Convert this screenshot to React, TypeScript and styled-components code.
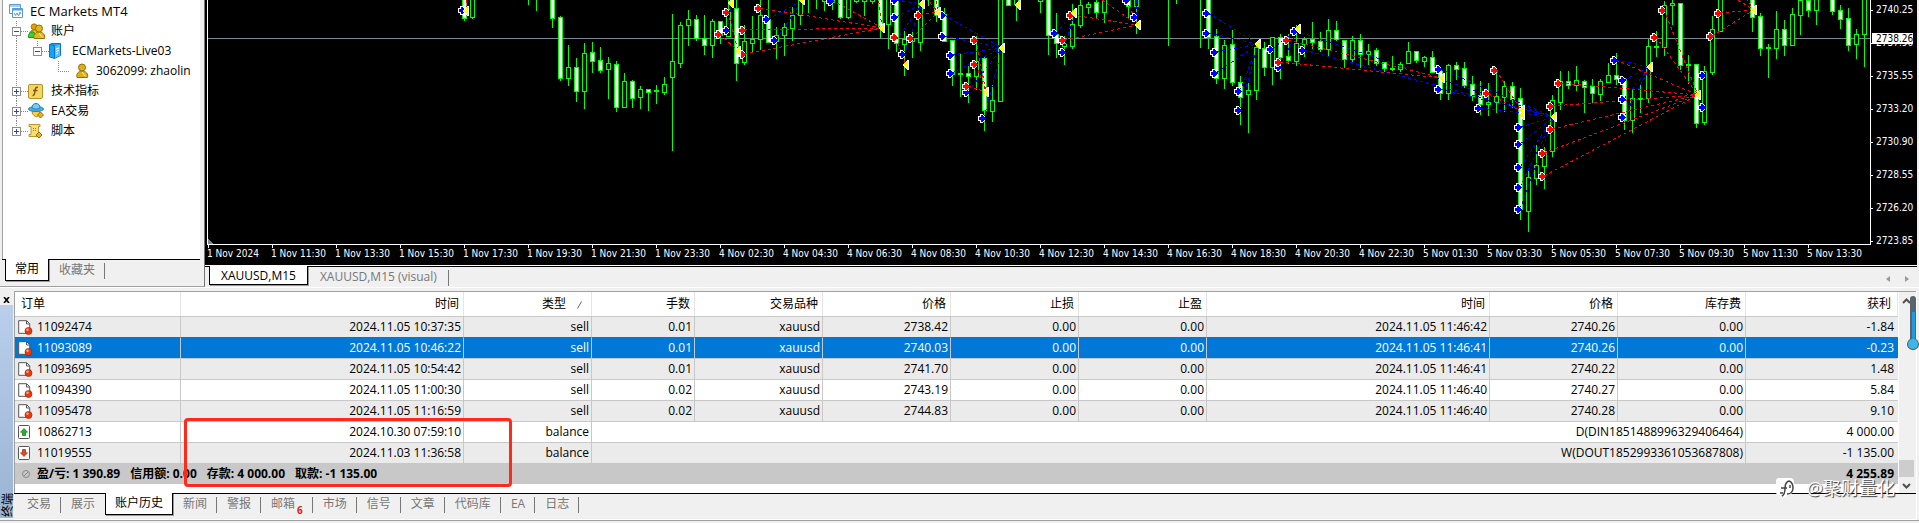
import React, { ReactNode } from "react";
import styled, { createGlobalStyle, css } from "styled-components";

const uiFont = `"Open Sans", "Noto Sans CJK SC", sans-serif`;
const frame = "#f0f0f0";
const line = "#a0a0a0";

const GlobalStyle = createGlobalStyle`
  * { box-sizing: border-box; }
  body {
    margin: 0;
    background: ${frame};
    color: #000;
    font: 12px/20px ${uiFont};
  }
  button { font: inherit; color: inherit; border: 0; padding: 0; background: none; }
  svg { display: block; }
`;

const App = styled.div`
  display: flex;
  flex-direction: column;
  min-height: 100vh;
  overflow: hidden;
`;

/* ---------- upper half: navigator and chart ---------- */

const Upper = styled.div`
  display: flex;
  height: 288px;
  border-bottom: 1px solid #fff;
`;

const Navigator = styled.aside`
  flex: none;
  display: flex;
  flex-direction: column;
  width: 205px;
  padding: 0 4px 2px 2px;
  border-right: 1px solid #777;
  border-bottom: 1px solid ${line};
`;

const NavBody = styled.nav`
  flex: 1;
  background: #fff;
  border-left: 1px solid ${line};
`;

const Tree = styled.ul`
  list-style: none;
  margin: 0;
  padding: 1px 0 0;
`;

const TreeRow = styled.li<{ $depth: number }>`
  display: flex;
  align-items: center;
  height: 20px;
  padding-left: ${(p) => [6, 8, 29, 52][p.$depth]}px;
  font-size: ${(p) => (p.$depth ? 12 : 13)}px;
  white-space: nowrap;
`;

const TreeIcon = styled.span<{ $wide?: boolean }>`
  flex: none;
  width: ${(p) => (p.$wide ? 23 : 21)}px;
`;

const Toggle = styled.button`
  flex: none;
  width: 17px;
  height: 20px;
`;

const TabBar = styled.div<{ $height: number; $start: number }>`
  display: flex;
  flex: none;
  align-items: flex-start;
  height: ${(p) => p.$height}px;
  border-top: 1px solid #000;
  padding-left: ${(p) => p.$start}px;
  background: ${frame};
`;

const activeTab = css<{ $roomy?: boolean }>`
  background: #fff;
  color: #000;
  border: 1px solid #000;
  border-top: 0;
  box-shadow: 1px 1px 0 #999;
  padding: 0 ${(p) => (p.$roomy ? 11 : 9)}px;
  margin-top: -1px;
`;

const Tab = styled.button<{ $active?: boolean; $next?: boolean; $roomy?: boolean; $height: number }>`
  position: relative;
  display: flex;
  flex: none;
  height: ${(p) => p.$height}px;
  line-height: 20px;
  padding: 0 ${(p) => (p.$roomy ? 12 : 10)}px;
  color: #777;
  white-space: nowrap;
  ${(p) =>
    !p.$active &&
    !p.$next &&
    css`
      background: linear-gradient(#777, #777) right 3px / 1px 16px no-repeat;
    `}
  ${(p) => p.$active && activeTab}
`;

const Unread = styled.sub`
  align-self: flex-end;
  margin-left: 2px;
  font-size: 10px;
  font-weight: bold;
  line-height: 12px;
  color: #e02020;
`;

const ChartColumn = styled.main`
  flex: 1;
  min-width: 0;
  display: flex;
  flex-direction: column;
  padding-right: 2px;
`;

const ChartWindow = styled.section`
  display: grid;
  grid-template-columns: 1fr 46px;
  grid-template-rows: 245px 20px;
  padding-left: 2px;
  background: #000;
  color: #fff;
  font: 10px/12px "DejaVu Sans Condensed", "DejaVu Sans", sans-serif;
`;

const Plot = styled.div`
  min-width: 0;
  overflow: hidden;
  border: solid #fff;
  border-width: 0 1px 1px;
`;

const PriceAxis = styled.div`
  position: relative;
`;

const PriceScale = styled.div`
  display: flex;
  flex-direction: column;
  justify-content: space-between;
  height: 247px;
  padding-top: 4px;
`;

const Price = styled.span`
  display: flex;
  align-items: center;
  height: 12px;
  &::before {
    content: "";
    width: 2px;
    height: 1px;
    margin-right: 3px;
    background: #fff;
  }
`;

const CurrentPrice = styled.strong`
  position: absolute;
  top: 33px;
  left: 1px;
  width: 41px;
  padding-left: 4px;
  height: 11px;
  line-height: 11px;
  background: #fff;
  color: #000;
  font-weight: normal;
`;

const TimeAxis = styled.div`
  grid-column: 1 / 3;
  display: flex;
  overflow: hidden;
`;

const Time = styled.span`
  flex: none;
  width: 64px;
  padding-top: 3px;
  white-space: nowrap;
  background: linear-gradient(#fff, #fff) 1px 0 / 1px 3px no-repeat;
`;

const ChartTabs = styled.div`
  display: flex;
  justify-content: space-between;
  border-top: 1px solid #fff;
`;

const Scrollers = styled.div`
  flex: none;
  display: flex;
  gap: 15px;
  padding: 5px 8px 0 0;
  border-top: 1px solid #000;
`;

const Stretch = styled.div`
  flex: 1;
  min-width: 0;
  overflow: hidden;
`;

/* ---------- lower half: terminal ---------- */

const Terminal = styled.section`
  position: relative;
  display: flex;
  height: 233px;
  padding-top: 3px;
  border-bottom: 1px solid ${line};
`;

const Grip = styled.div`
  flex: none;
  width: 14px;
  display: flex;
  flex-direction: column;
  padding-bottom: 2px;
`;

const Close = styled.button`
  height: 14px;
  padding: 3px 0 0 3px;
`;

const GripBar = styled.div`
  flex: 1;
  width: 13px;
  display: flex;
  align-items: flex-end;
  padding-bottom: 1px;
  background: linear-gradient(#b9cfeb, #9ab4d3);
`;

const GripTitle = styled.span`
  width: 13px;
  height: 25px;
  writing-mode: vertical-rl;
  text-orientation: sideways;
  transform: rotate(180deg);
  line-height: 13px;
  font-family: "Noto Sans CJK SC", sans-serif;
  white-space: nowrap;
`;

const TerminalBody = styled.div`
  flex: 1;
  min-width: 0;
  display: flex;
  flex-direction: column;
  margin-right: 2px;
  padding-bottom: 2px;
  border-bottom: 1px solid #fff;
  border-right: 1px solid #fff;
`;

const ListArea = styled.div`
  flex: 1;
  display: flex;
  background: #fff;
  border: solid ${line};
  border-width: 1px 0 0 1px;
`;

const TableWrap = styled.div`
  flex: 1;
  min-width: 0;
  overflow: hidden;
`;

const Table = styled.table`
  width: 100%;
  table-layout: fixed;
  border-collapse: separate;
  border-spacing: 0;
  text-align: right;
`;

const Head = styled.th<{ $left?: boolean; $last?: boolean }>`
  height: 24px;
  padding: 0 4px 0 6px;
  ${(p) => p.$last && "padding-right: 6px;"}
  text-align: ${(p) => (p.$left ? "left" : "right")};
  font-weight: normal;
  line-height: 20px;
  border-right: 1px solid #e5e5e5;
  white-space: nowrap;
`;

const SortMark = styled.svg`
  display: inline-block;
  margin: 0 5px 0 11px;
  vertical-align: middle;
`;

const Row = styled.tr<{ $shade?: boolean; $selected?: boolean }>`
  background: ${(p) => (p.$selected ? "#0078d7" : p.$shade ? "#ebebeb" : "#fff")};
  color: ${(p) => (p.$selected ? "#fff" : "#000")};
  --rule: ${(p) => (p.$selected ? "#0078d7" : "#c8c8c8")};
`;

const Cell = styled.td<{ $left?: boolean; $last?: boolean }>`
  height: 21px;
  padding: 0 2px 0 3px;
  text-align: ${(p) => (p.$left ? "left" : "right")};
  line-height: 20px;
  white-space: nowrap;
  border-top: 1px solid var(--rule);
  border-right: 1px solid #c8c8c8;
  ${(p) => p.$last && "border-right-color: transparent; padding-right: 3px;"}
`;

const OrderCell = styled.span`
  display: flex;
  align-items: center;
  gap: 4px;
  height: 20px;
`;

const Summary = styled.tr`
  background: #c8c8c8;
  font-weight: bold;
  white-space: nowrap;
`;

const SummaryCell = styled.td<{ $left?: boolean }>`
  height: 21px;
  padding: 0 4px 0 6px;
  line-height: 20px;
  text-align: ${(p) => (p.$left ? "left" : "right")};
`;

const SummaryList = styled.div`
  display: flex;
  align-items: center;
  gap: 10px;
`;

const SummaryItem = styled.span`
  display: flex;
  align-items: center;
  gap: 6px;
`;

const ScrollBar = styled.div`
  flex: none;
  width: 17px;
  display: flex;
  flex-direction: column;
  justify-content: space-between;
  align-items: center;
  padding: 6px 2px 4px 0;
  margin-left: 1px;
  background: ${frame};
`;

const ScrollThumb = styled.span`
  width: 15px;
  height: 17px;
  margin: auto 0 6px;
  background: #cdcdcd;
`;

const Highlight = styled.div`
  position: absolute;
  left: 184px;
  top: 130px;
  width: 328px;
  height: 69px;
  border: 3px solid #ff2a1c;
  border-radius: 4px;
`;

const Thermometer = styled.svg`
  position: absolute;
  right: 0;
  top: 7px;
`;

const Watermark = styled.div`
  position: absolute;
  right: 24px;
  top: 188px;
  display: flex;
  align-items: center;
  gap: 12px;
  height: 24px;
  font-size: 18px;
  color: #fff;
  text-shadow: 1px 1px 1px #333;
`;

/* ---------- chart data ---------- */

// x, high, body top, body bottom, low, filled
type Candle = [number, number, number, number, number, 0 | 1];
const candles: Candle[] = [
  [464, -5, -5, 18, 20, 1], [472, -5, -5, 17, 18, 0], [528, -5, -5, -4, 4, 0], [536, -5, -5, -4, 10, 0],
  [552, -5, -5, 18, 27, 1], [560, 16, 17, 78, 80, 1], [568, 45, 67, 78, 85, 0], [576, 58, 67, 91, 101, 1],
  [584, 43, 53, 91, 108, 0], [592, 42, 52, 61, 72, 1], [600, 47, 60, 70, 72, 1], [608, 57, 63, 69, 98, 0],
  [616, 61, 64, 107, 111, 1], [624, 73, 81, 107, 107, 0], [632, 80, 81, 98, 107, 1], [640, 86, 89, 97, 108, 0],
  [648, 89, 89, 92, 110, 1], [656, 85, 90, 91, 103, 0], [664, 77, 84, 92, 94, 0], [672, 14, 61, 77, 150, 0],
  [680, 22, 25, 63, 67, 0], [688, 10, 19, 25, 45, 0], [696, 15, 19, 38, 40, 1], [704, 15, 38, 45, 54, 1],
  [712, 19, 21, 45, 57, 0], [720, 21, 21, 35, 43, 1], [728, 0, 9, 36, 36, 0], [736, -5, 8, 63, 80, 1],
  [744, 25, 41, 62, 64, 0], [752, 16, 39, 43, 52, 0], [760, 0, 15, 39, 49, 0], [768, -5, 19, 42, 42, 1],
  [776, 27, 35, 41, 58, 0], [784, 23, 27, 35, 55, 0], [792, 7, 15, 28, 40, 0], [800, -5, -5, 15, 24, 0],
  [808, -5, -5, -4, 12, 0], [816, -5, -5, -4, 8, 0], [824, -5, -5, 1, 10, 0], [832, -5, 0, 2, 9, 0],
  [840, -5, -5, 17, 18, 1], [848, -5, -5, 17, 18, 0], [856, -5, -5, 1, 2, 0], [864, -5, -5, 1, 15, 0],
  [872, -5, -5, 1, 3, 0], [880, -5, -5, 27, 37, 1], [888, -5, -5, 24, 48, 0], [896, -5, -5, 43, 51, 1],
  [904, 31, 39, 44, 75, 0], [912, 31, 38, 41, 57, 0], [920, -5, -5, 42, 50, 0], [928, -5, -5, -4, 5, 0],
  [936, -5, -5, 15, 21, 1], [944, 8, 14, 41, 41, 1], [952, 40, 40, 74, 85, 1], [960, 54, 73, 74, 96, 0],
  [968, 66, 73, 76, 102, 1], [976, 36, 61, 76, 89, 0], [984, 56, 58, 110, 130, 1], [992, 85, 100, 111, 121, 0],
  [1000, -5, -5, 101, 101, 0], [1008, -5, -5, 5, 5, 1], [1016, -5, -5, 4, 20, 0],
  [1040, -5, -5, 1, 12, 0], [1048, -5, -5, 35, 54, 1], [1056, 13, 34, 43, 57, 1], [1064, 36, 43, 46, 64, 0],
  [1072, 4, 24, 46, 48, 0], [1080, -5, 5, 25, 27, 0], [1088, 2, 4, 7, 13, 0], [1096, -5, 2, 12, 18, 1],
  [1104, -5, -5, 12, 22, 0], [1128, -5, -5, 6, 18, 1], [1136, -5, -5, 6, 33, 0], [1168, -5, -5, -4, 45, 0],
  [1176, -5, -5, -4, 3, 0], [1200, -5, -5, -4, 47, 0], [1208, -5, -5, 37, 48, 1], [1216, 29, 36, 78, 83, 1],
  [1224, 40, 45, 78, 88, 0], [1232, 30, 44, 82, 85, 1], [1240, 76, 82, 97, 124, 1], [1248, 83, 90, 94, 132, 0],
  [1256, 46, 47, 90, 99, 0], [1264, 42, 48, 67, 75, 1], [1272, 37, 37, 67, 84, 0], [1280, 34, 37, 57, 78, 1],
  [1288, 34, 56, 60, 63, 1], [1296, 25, 43, 61, 65, 0], [1304, 37, 39, 44, 56, 0], [1312, 22, 39, 42, 48, 1],
  [1320, 32, 41, 49, 51, 1], [1328, 19, 30, 49, 55, 0], [1336, 21, 30, 39, 40, 1], [1344, 40, 40, 59, 67, 1],
  [1352, 36, 40, 59, 63, 0], [1360, 34, 40, 54, 67, 1], [1368, 44, 51, 54, 64, 0], [1376, 48, 50, 63, 65, 1],
  [1384, 62, 62, 68, 71, 1], [1392, 56, 68, 69, 70, 0], [1400, 62, 64, 69, 71, 0], [1408, 42, 51, 63, 63, 0],
  [1416, 51, 51, 60, 62, 1], [1424, 56, 57, 61, 66, 0], [1432, 51, 57, 72, 72, 1], [1440, 68, 70, 93, 99, 1],
  [1448, 64, 65, 93, 99, 0], [1456, 62, 65, 69, 79, 1], [1464, 62, 68, 85, 87, 1], [1472, 76, 84, 96, 100, 1],
  [1480, 81, 95, 104, 114, 1], [1488, 83, 102, 104, 115, 0], [1496, 71, 96, 102, 112, 0], [1504, 81, 86, 97, 111, 0],
  [1512, 82, 86, 99, 107, 1], [1520, 88, 98, 209, 219, 1], [1528, 170, 177, 211, 231, 0], [1536, 145, 165, 178, 184, 0],
  [1544, 147, 151, 166, 188, 0], [1552, 95, 100, 151, 156, 0], [1560, 71, 81, 102, 109, 0], [1568, 71, 81, 85, 88, 1],
  [1576, 66, 80, 85, 90, 0], [1584, 80, 81, 87, 112, 1], [1592, 79, 86, 93, 102, 1], [1600, 79, 81, 94, 100, 0],
  [1608, 63, 75, 82, 82, 0], [1616, 53, 75, 79, 84, 1], [1624, 78, 78, 120, 129, 1], [1632, 88, 98, 120, 132, 0],
  [1640, 85, 98, 99, 112, 0], [1648, 39, 46, 98, 102, 0], [1656, 31, 46, 47, 56, 0], [1664, 1, 5, 47, 55, 0],
  [1672, -5, 3, 5, 24, 0], [1680, 3, 3, 65, 69, 1], [1688, 55, 64, 65, 83, 0], [1696, 64, 64, 123, 127, 1],
  [1704, 66, 71, 122, 124, 0], [1712, 16, 29, 72, 74, 0], [1720, -5, -5, 31, 31, 0], [1752, -5, -5, 17, 31, 1],
  [1760, 13, 16, 48, 55, 1], [1768, 44, 47, 48, 77, 0], [1776, 11, 29, 48, 58, 0], [1784, 20, 29, 45, 55, 1],
  [1792, 8, 14, 45, 45, 0], [1800, -5, 0, 15, 34, 0], [1808, -5, 0, 10, 16, 1], [1816, -5, -5, 10, 24, 0],
  [1832, -5, -5, 11, 14, 1], [1840, 5, 10, 19, 28, 1], [1848, 8, 18, 45, 50, 1], [1856, 29, 34, 44, 58, 0],
  [1864, -5, -5, 34, 66, 0],
];

// every close point with the entry points joined to it
type Fan = [number, number, [number, number][]];
const redFans: Fan[] = [
  [466, 9, [[466, 0]]],
  [738, 51, [[720, 34], [728, 12]]],
  [882, 28, [[760, 8], [744, 30], [744, 54], [832, 0], [878, -5]]],
  [906, 66, [[896, 37]]],
  [938, 12, [[912, 38], [920, 15], [926, -2], [935, -5]]],
  [986, 92, [[976, 40], [976, 64], [968, 86]]],
  [1138, 25, [[1072, 15], [1064, 40], [1102, 0], [1126, 0]]],
  [1442, 78, [[1288, 40], [1280, 62]]],
  [1522, 112, [[1496, 70], [1488, 93]]],
  [1698, 95, [[1544, 176], [1544, 153], [1552, 129], [1552, 106], [1560, 83], [1616, 60], [1656, 37], [1664, 10]]],
  [1754, 10, [[1720, 13], [1712, 36], [1738, 0], [1746, -2]]],
];
const blueFans: Fan[] = [
  [731, 3, [[728, 30]]],
  [802, 1, [[768, 19], [776, 40]]],
  [922, 4, [[896, 0], [896, 17], [896, 40], [904, 54]]],
  [1002, 48, [[944, 15], [944, 36], [952, 55], [952, 73], [968, 92], [984, 118]]],
  [1074, 13, [[1056, 33], [1064, 52]]],
  [1136, 17, [[1136, 0]]],
  [1258, 44, [[1208, 13], [1208, 33], [1216, 52], [1216, 73], [1240, 91], [1240, 110]]],
  [1298, 29, [[1272, 49], [1280, 67]]],
  [1554, 117, [[1296, 31], [1304, 50], [1440, 69], [1440, 89], [1480, 108], [1520, 127], [1520, 144], [1520, 167], [1520, 187], [1520, 209]]],
  [1650, 67, [[1616, 60], [1624, 80], [1624, 99], [1624, 117]]],
];

const redArrows = [
  [726, 12], [718, 34], [742, 30], [742, 54], [758, 8], [894, 37], [910, 38], [918, 15], [974, 40], [974, 64],
  [966, 86], [1070, 15], [1062, 40], [1278, 62], [1286, 40], [1494, 70], [1486, 93], [1542, 153], [1542, 176],
  [1550, 129], [1550, 106], [1558, 83], [1654, 37], [1662, 10], [1710, 36], [1718, 13],
];
const blueArrows = [
  [462, 10], [726, 30], [766, 19], [774, 40], [830, 1], [894, 17], [894, 0], [902, 54], [942, 15], [942, 36],
  [950, 55], [950, 73], [966, 92], [982, 118], [1054, 33], [1062, 52], [1126, 0], [1134, 17], [1206, 13],
  [1206, 33], [1214, 52], [1214, 73], [1238, 91], [1238, 110], [1270, 49], [1278, 67], [1294, 31], [1302, 50],
  [1438, 69], [1438, 89], [1478, 108], [1518, 127], [1518, 144], [1518, 167], [1518, 187], [1518, 209],
  [1614, 60], [1622, 80], [1622, 99], [1622, 117], [1702, 75], [1702, 107],
];
const exits = [
  [466, 11], [731, 3], [738, 51], [802, 0], [882, 28], [906, 65], [922, 4], [938, 12], [986, 92], [1002, 48],
  [1018, 5], [1074, 13], [1138, 25], [1258, 44], [1298, 29], [1442, 78], [1522, 110], [1522, 115], [1554, 117],
  [1650, 67], [1698, 95], [1754, 10],
];

const Fans = ({ data, color }: { data: Fan[]; color: string }) => (
  <g stroke={color} strokeDasharray="3 3">
    {data.flatMap(([x, y, from]) =>
      from.map(([fx, fy]) => <line key={`${x} ${fx} ${fy}`} x1={fx} y1={fy} x2={x} y2={y} />)
    )}
  </g>
);

const Arrows = ({ data, color }: { data: number[][]; color: string }) => (
  <>
    {data.map(([x, y]) => (
      <g key={`${x} ${y}`} transform={`translate(${x} ${y})`}>
        <path d="M-4-2h2v-2h3v1h1v1h1v5h-1v1h-1v1h-3v-2h-2z" fill="#fff" />
        <path d="M-3-1h2v-2h2v1h1v1h1v1h1v1h-1v1h-1v1h-1v1h-2v-2h-2z" fill={color} />
      </g>
    ))}
  </>
);

const PriceChart = () => (
  <svg width="1663" height="244" viewBox="208 0 1663 244" shapeRendering="crispEdges" role="img" aria-label="XAUUSD M15">
    <path d="M208 38h1663v1h-1663z" fill="#778899" />
    {candles.map(([x, high, top, bottom, low, filled]) => (
      <g key={x}>
        <path d={`M${x} ${high}h1V${low + 1}h-1z`} fill="#0f0" />
        <path d={`M${x - 2} ${top}h5V${bottom + 1}h-5z`} fill="#0f0" />
        {bottom - top > 1 && (
          <path d={`M${x - 1} ${top + 1}h3V${bottom}h-3z`} fill={filled ? "#fff" : "#000"} />
        )}
      </g>
    ))}
    <Fans data={blueFans} color="#00f" />
    <Fans data={redFans} color="#f00" />
    <Arrows data={blueArrows} color="#00f" />
    <Arrows data={redArrows} color="#f00" />
    {exits.map(([x, y]) => (
      <g key={`${x} ${y}`} transform={`translate(${x} ${y})`}>
        <path d="M-4 0l5-5h2v10h-2z" fill="#fff" />
        <path d="M-3 0l4-4h1v8h-1z" fill="#ff0" />
      </g>
    ))}
    <path d="M208 239l5 5h-5z" fill="#778899" />
  </svg>
);

/* ---------- icons ---------- */

const PersonShape = ({ fill, edge }: { fill: string; edge: string }) => (
  <g fill={fill} stroke={edge}>
    <path d="M1 14.500c-1-3 1-6.500 5-6.500s6.500 3 5.500 6.500z" />
    <circle cx="6" cy="4.500" r="3.500" />
    <path d="M6 9l3.500 4.500" stroke="#fff3b0" fill="none" />
  </g>
);

const TerminalIcon = () => (
  <svg width="15" height="14" viewBox="0 0 15 14">
    <g fill="#fff" stroke="#5b9bd9">
      <path d="M.5.5h11v9h-11zM.5 2h11" />
      <path d="M3.500 4.500h10v9h-10z" />
      <path d="M3.500 5.500h10" strokeWidth="2" />
      <path d="M5 9l1.500 2.500L8 9l1.500 3L11 8l1 2" fill="none" />
    </g>
  </svg>
);

const AccountsIcon = () => (
  <svg width="18" height="17" viewBox="0 0 18 17">
    <g transform="translate(1 0) scale(.85)">
      <PersonShape fill="#d9a400" edge="#957000" />
    </g>
    <path d="M.5 14.500c-.5-3 1-5.500 3.500-5.500s4 2 3.500 5.500z" fill="#35d435" stroke="#14961a" />
    <g transform="translate(5 1)">
      <PersonShape fill="#e3b71b" edge="#957000" />
    </g>
  </svg>
);

const PersonIcon = () => (
  <svg width="14" height="16" viewBox="-1 0 14 16">
    <PersonShape fill="#dcae1c" edge="#957000" />
  </svg>
);

const ServerIcon = () => (
  <svg width="12" height="16" viewBox="0 0 12 16">
    <path d="M.5 1.500L3 .5h8.500v12l-6 3-5-1.500z" fill="#1ca0f4" stroke="#0a78c8" />
    <path d="M.5 1.500l5 1v13" fill="none" stroke="#0a78c8" />
    <path d="M6 3l5-1.500v11L6 15z" fill="#58c4ff" />
    <path d="M7 6l3-1M7 8.500l3-1M7 11l2-1" stroke="#fff" />
  </svg>
);

const FunctionIcon = () => (
  <svg width="15" height="15" viewBox="0 0 15 15">
    <rect x=".5" y=".5" width="14" height="14" rx="1.500" fill="#f6d568" stroke="#b89322" />
    <path d="M10 3.500c-2-.8-2.500.5-2.800 2.500S6.500 12 4.500 11.500M5 6.500h4.500" fill="none" stroke="#7c5b08" strokeWidth="1.500" />
  </svg>
);

const ExpertIcon = () => (
  <svg width="17" height="16" viewBox="0 0 17 16">
    <path d="M4 7.500h8l-.5 4.500L8 14l-3.500-3z" fill="#f4cf52" stroke="#b08a18" />
    <ellipse cx="8" cy="6" rx="7.500" ry="2.500" fill="#4aaee0" stroke="#2880b4" />
    <path d="M4 5c0-3 1.500-4.500 4-4.500s4 1.500 4 4.500c-2 1.500-6 1.500-8 0z" fill="#74cdf2" stroke="#2880b4" />
    <path d="M12.500 9l3 3-3 3-3-3z" fill="#e4b424" stroke="#94700a" />
  </svg>
);

const ScriptIcon = () => (
  <svg width="15" height="16" viewBox="0 0 15 16">
    <path d="M1 1.500h11v2h-1.500v8H12v2H1v-2h2v-8H1z" fill="#f8dd78" stroke="#b8962c" />
    <path d="M5 5.500h4M5 7.500h4" stroke="#a88418" strokeDasharray="1 1" />
    <path d="M11 9l3 3-3 3-3-3z" fill="#e4b424" stroke="#94700a" />
  </svg>
);

const ToggleMark = ({ open, below = true }: { open?: boolean; below?: boolean }) => (
  <svg width="17" height="20" viewBox="0 0 17 20" shapeRendering="crispEdges">
    <path d="M5.500 0v6M10 10.500h7" stroke="#888" strokeDasharray="1 1" />
    {below && <path d="M5.500 15v5" stroke="#888" strokeDasharray="1 1" />}
    <rect x="1.500" y="6.500" width="8" height="8" fill="#fff" stroke="#8c8c8c" />
    <path d={open ? "M3 10.500h5" : "M3 10.500h5M5.500 8v5"} stroke="#2b4bb0" />
  </svg>
);

const Branch = ({ children }: { children?: ReactNode }) => (
  <svg width="20" height="20" viewBox="0 0 20 20" shapeRendering="crispEdges">
    <path d="M3.500 0v10.500h11" fill="none" stroke="#888" strokeDasharray="1 1" />
    {children}
  </svg>
);

/* vertical guide that runs past the nested rows */
const GuideRow = styled(TreeRow)`
  background: repeating-linear-gradient(#888 0 1px, transparent 1px 2px) 13px 0 / 1px 100% no-repeat;
`;

const OrderIcon = () => (
  <svg width="15" height="16" viewBox="0 0 15 16">
    <path d="M.7 1.700h8l3 3v9.600h-11z" fill="#fff" stroke="#555" />
    <path d="M8.500 2v3h3" fill="none" stroke="#555" />
    <circle cx="10.500" cy="12" r="3.500" fill="#e63c10" stroke="#a82400" strokeWidth=".7" />
    <circle cx="9.500" cy="10.800" r="1.200" fill="#ffb090" />
  </svg>
);

const BalanceIcon = ({ down }: { down?: boolean }) => (
  <svg width="15" height="16" viewBox="0 0 15 16">
    <rect x=".5" y="1.500" width="11" height="13" rx="1" fill="#fff" stroke="#555" />
    <path
      d="M6 4.500L9.500 8.200H7.500V11.500h-3V8.200H2.500z"
      fill={down ? "#e84a18" : "#28b428"}
      stroke={down ? "#a02800" : "#0c7414"}
      strokeWidth=".7"
      transform={down ? "rotate(180 6 8)" : undefined}
    />
  </svg>
);

const Chevron = ({ down }: { down?: boolean }) => (
  <svg width="9" height="6" viewBox="0 0 9 6">
    <path d={down ? "M1 1l3.500 3.500L8 1" : "M1 5l3.500-3.500L8 5"} fill="none" stroke="#505050" strokeWidth="2" />
  </svg>
);

/* ---------- table data ---------- */

const columns: [string, number | undefined][] = [
  ["订单", 166], ["时间", 283], ["类型", 128], ["手数", 103], ["交易品种", 128], ["价格", 128],
  ["止损", 128], ["止盈", 128], ["时间", 283], ["价格", 128], ["库存费", 128], ["获利", undefined],
];

const trades = [
  ["11092474", "2024.11.05 10:37:35", "sell", "0.01", "xauusd", "2738.42", "0.00", "0.00", "2024.11.05 11:46:42", "2740.26", "0.00", "-1.84"],
  ["11093089", "2024.11.05 10:46:22", "sell", "0.01", "xauusd", "2740.03", "0.00", "0.00", "2024.11.05 11:46:41", "2740.26", "0.00", "-0.23"],
  ["11093695", "2024.11.05 10:54:42", "sell", "0.01", "xauusd", "2741.70", "0.00", "0.00", "2024.11.05 11:46:41", "2740.22", "0.00", "1.48"],
  ["11094390", "2024.11.05 11:00:30", "sell", "0.02", "xauusd", "2743.19", "0.00", "0.00", "2024.11.05 11:46:40", "2740.27", "0.00", "5.84"],
  ["11095478", "2024.11.05 11:16:59", "sell", "0.02", "xauusd", "2744.83", "0.00", "0.00", "2024.11.05 11:46:40", "2740.28", "0.00", "9.10"],
];

const balances = [
  ["10862713", "2024.10.30 07:59:10", "D(DIN1851488996329406464)", "4 000.00"],
  ["11019555", "2024.11.03 11:36:58", "W(DOUT1852993361053687808)", "-1 135.00"],
];

const totals = ["信用额: 0.00", "存款: 4 000.00", "取款: -1 135.00"];

const times = [
  "1 Nov 2024", "1 Nov 11:30", "1 Nov 13:30", "1 Nov 15:30", "1 Nov 17:30", "1 Nov 19:30", "1 Nov 21:30",
  "1 Nov 23:30", "4 Nov 02:30", "4 Nov 04:30", "4 Nov 06:30", "4 Nov 08:30", "4 Nov 10:30", "4 Nov 12:30",
  "4 Nov 14:30", "4 Nov 16:30", "4 Nov 18:30", "4 Nov 20:30", "4 Nov 22:30", "5 Nov 01:30", "5 Nov 03:30",
  "5 Nov 05:30", "5 Nov 07:30", "5 Nov 09:30", "5 Nov 11:30", "5 Nov 13:30",
];

const prices = ["2740.25", "2737.90", "2735.55", "2733.20", "2730.90", "2728.55", "2726.20", "2723.85"];

const terminalTabs = ["交易", "展示", "账户历史", "新闻", "警报", "邮箱", "市场", "信号", "文章", "代码库", "EA", "日志"];

export default function TradingTerminal() {
  return (
    <App>
      <GlobalStyle />
      <Upper>
        <Navigator>
          <NavBody>
            <Tree>
              <TreeRow $depth={0}>
                <TreeIcon><TerminalIcon /></TreeIcon>EC Markets MT4
              </TreeRow>
              <TreeRow $depth={1}>
                <Toggle aria-label="折叠 账户"><ToggleMark open /></Toggle>
                <TreeIcon $wide><AccountsIcon /></TreeIcon>账户
              </TreeRow>
              <GuideRow $depth={2}>
                <Toggle aria-label="折叠 ECMarkets-Live03"><ToggleMark open below={false} /></Toggle>
                <TreeIcon $wide><ServerIcon /></TreeIcon>ECMarkets-Live03
              </GuideRow>
              <GuideRow $depth={3}>
                <Branch />
                <TreeIcon><PersonIcon /></TreeIcon>3062099: zhaolin
              </GuideRow>
              <TreeRow $depth={1}>
                <Toggle aria-label="展开 技术指标"><ToggleMark /></Toggle>
                <TreeIcon $wide><FunctionIcon /></TreeIcon>技术指标
              </TreeRow>
              <TreeRow $depth={1}>
                <Toggle aria-label="展开 EA交易"><ToggleMark /></Toggle>
                <TreeIcon $wide><ExpertIcon /></TreeIcon>EA交易
              </TreeRow>
              <TreeRow $depth={1}>
                <Toggle aria-label="展开 脚本"><ToggleMark below={false} /></Toggle>
                <TreeIcon $wide><ScriptIcon /></TreeIcon>脚本
              </TreeRow>
            </Tree>
          </NavBody>
          <TabBar $height={25} $start={3}>
            <Tab $active $height={22}>常用</Tab>
            <Tab $height={22}>收藏夹</Tab>
          </TabBar>
        </Navigator>
        <ChartColumn>
          <ChartWindow>
            <Plot><PriceChart /></Plot>
            <PriceAxis>
              <PriceScale>
                {prices.map((p) => <Price key={p}>{p}</Price>)}
              </PriceScale>
              <CurrentPrice>2738.26</CurrentPrice>
            </PriceAxis>
            <TimeAxis>
              {times.map((t) => <Time key={t}>{t}</Time>)}
            </TimeAxis>
          </ChartWindow>
          <ChartTabs>
            <Stretch>
              <TabBar $height={20} $start={4}>
                <Tab $active $roomy $height={19}>XAUUSD,M15</Tab>
                <Tab $roomy $height={19}>XAUUSD,M15 (visual)</Tab>
              </TabBar>
            </Stretch>
            <Scrollers>
              <button aria-label="向左"><svg width="4" height="6"><path d="M4 0v6L0 3z" fill="#999" /></svg></button>
              <button aria-label="向右"><svg width="4" height="6"><path d="M0 0v6l4-3z" fill="#999" /></svg></button>
            </Scrollers>
          </ChartTabs>
        </ChartColumn>
      </Upper>

      <Terminal>
        <Grip>
          <Close aria-label="关闭">
            <svg width="7" height="6" viewBox="0 0 7 6"><path d="M1 0l5 6M6 0L1 6" stroke="#000" strokeWidth="1.600" /></svg>
          </Close>
          <GripBar><GripTitle>终端</GripTitle></GripBar>
        </Grip>
        <TerminalBody>
          <ListArea>
            <TableWrap>
              <Table>
                <colgroup>
                  {columns.map(([, w], i) => <col key={i} width={w} />)}
                </colgroup>
                <thead>
                  <tr>
                    {columns.map(([name], i) => (
                      <Head key={i} scope="col" $left={i === 0} $last={i === 11}>
                        {name}
                        {i === 2 && (
                          <SortMark width="5" height="8"><path d="M.5 7.500l4-7" stroke="#666" /></SortMark>
                        )}
                      </Head>
                    ))}
                  </tr>
                </thead>
                <tbody>
                  {trades.map((trade, r) => (
                    <Row key={trade[0]} $shade={r % 2 === 0} $selected={r === 1}>
                      {trade.map((value, i) => (
                        <Cell key={i} $left={i === 0} $last={i === 11}>
                          {i === 0 ? <OrderCell><OrderIcon />{value}</OrderCell> : value}
                        </Cell>
                      ))}
                    </Row>
                  ))}
                  {balances.map(([order, time, comment, profit], r) => (
                    <Row key={order} $shade={r === 1}>
                      <Cell $left><OrderCell><BalanceIcon down={r === 1} />{order}</OrderCell></Cell>
                      <Cell>{time}</Cell>
                      <Cell>balance</Cell>
                      <Cell colSpan={8}>{comment}</Cell>
                      <Cell $last>{profit}</Cell>
                    </Row>
                  ))}
                </tbody>
                <tfoot>
                  <Summary>
                    <SummaryCell $left colSpan={11}>
                      <SummaryList>
                        <SummaryItem>
                          <svg width="10" height="10"><circle cx="5" cy="5" r="3.500" fill="none" stroke="#888" /><path d="M3 7l4-4" stroke="#888" /></svg>
                          盈/亏: 1 390.89
                        </SummaryItem>
                        {totals.map((t) => <SummaryItem key={t}>{t}</SummaryItem>)}
                      </SummaryList>
                    </SummaryCell>
                    <SummaryCell>4 255.89</SummaryCell>
                  </Summary>
                </tfoot>
              </Table>
            </TableWrap>
            <ScrollBar>
              <Chevron />
              <ScrollThumb />
              <Chevron down />
            </ScrollBar>
          </ListArea>
          <TabBar $height={24} $start={3}>
            {terminalTabs.map((name, i) => (
              <Tab key={name} $height={22} $active={i === 2} $next={i === 1}>
                {name}
                {name === "邮箱" && <Unread>6</Unread>}
              </Tab>
            ))}
          </TabBar>
        </TerminalBody>
        <Highlight />
        <Thermometer width="13" height="58" viewBox="0 0 13 58">
          <path d="M4 4a3 3 0 0 1 6 0v40a6 6 0 1 1-6 0z" fill="#58646e" />
          <path d="M6 17h3v30h-3z" fill="#1e9be0" />
          <circle cx="7" cy="49" r="5" fill="#3cb8e8" />
        </Thermometer>
        <Watermark>
          <svg width="20" height="22" viewBox="0 0 20 22">
            <path d="M4 1h11q4 0 4 4v7q0 3-3 5l-4 1-2 3-2-3H4q-3 0-3-3V4q0-3 3-3z" fill="#fff" />
            <path d="M7 19c2-1 3-4 3-8 0-3 1-6 4-7 3 1 4 3 4 7s-3 6-6 6M6 11h6M5 16h3M15 8v3" fill="none" stroke="#444" strokeWidth="1.500" />
          </svg>
          @聚财量化
        </Watermark>
      </Terminal>
    </App>
  );
}
